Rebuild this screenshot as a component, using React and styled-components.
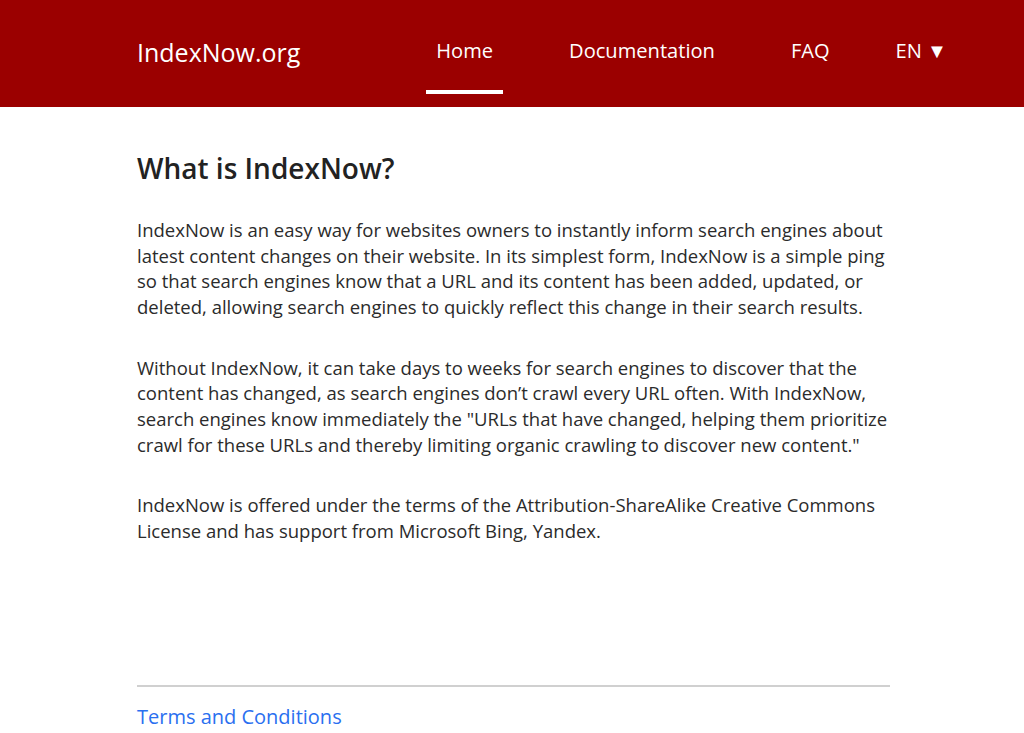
import React from "react";
import styled, { createGlobalStyle } from "styled-components";

const Global = createGlobalStyle`
  html, body { margin: 0; padding: 0; background: #fff; }
  body { font-family: "Open Sans", "Noto Sans", sans-serif; color: #222; }
`;

const Header = styled.header`
  background: #9b0000;
  height: 107px;
`;

const HeaderInner = styled.div`
  width: 750px;
  margin: 0 auto;
  height: 100%;
  display: flex;
  align-items: center;
  justify-content: space-between;
`;

const Brand = styled.a`
  color: #fff;
  font-size: 25px;
  text-decoration: none;
  margin-top: -4px;
`;

const Nav = styled.nav`
  display: flex;
  align-items: stretch;
  height: 100%;
  margin-right: -98px;
`;

const NavItem = styled.a`
  position: relative;
  display: flex;
  align-items: center;
  padding: 0 38px 6px ${(p) => (p.$lang ? "28px" : "38px")};
  color: #fff;
  font-size: 20.1px;
  text-decoration: none;
  ${(p) =>
    p.$active &&
    `&::after {
      content: "";
      position: absolute;
      left: 28px;
      right: 28px;
      bottom: 13px;
      height: 4px;
      background: #fff;
    }`}
`;

const Main = styled.main`
  width: 750px;
  margin: 0 auto;
  padding-top: 42px;
  min-height: 578px;
  box-sizing: border-box;
`;

const Title = styled.h1`
  margin: 0 0 30px;
  font-size: 28px;
  font-weight: 600;
  color: #222;
`;

const Para = styled.p`
  margin: 0 -30px 35px 0;
  font-size: 18.5px;
  line-height: 25.67px;
  color: #2b2b2b;
  white-space: nowrap;
`;

const Footer = styled.footer`
  width: 750px;
  margin: 0 auto;
`;

const Rule = styled.hr`
  margin: 0 -3px 16px 0;
  border: 0;
  border-top: 2px solid #d0d0d0;
`;

const FooterLink = styled.a`
  color: #2a6ff0;
  font-size: 20px;
  text-decoration: none;
`;

export default function App() {
  return (
    <>
      <Global />
      <Header>
        <HeaderInner>
          <Brand href="#">IndexNow.org</Brand>
          <Nav>
            <NavItem href="#" $active>Home</NavItem>
            <NavItem href="#">Documentation</NavItem>
            <NavItem href="#">FAQ</NavItem>
            <NavItem href="#" $lang>EN ▼</NavItem>
          </Nav>
        </HeaderInner>
      </Header>
      <Main>
        <Title>What is IndexNow?</Title>
        <Para>
          IndexNow is an easy way for websites owners to instantly inform search engines about<br />
          latest content changes on their website. In its simplest form, IndexNow is a simple ping<br />
          so that search engines know that a URL and its content has been added, updated, or<br />
          deleted, allowing search engines to quickly reflect this change in their search results.
        </Para>
        <Para>
          Without IndexNow, it can take days to weeks for search engines to discover that the<br />
          content has changed, as search engines don’t crawl every URL often. With IndexNow,<br />
          search engines know immediately the "URLs that have changed, helping them prioritize<br />
          crawl for these URLs and thereby limiting organic crawling to discover new content."
        </Para>
        <Para>
          IndexNow is offered under the terms of the Attribution-ShareAlike Creative Commons<br />
          License and has support from Microsoft Bing, Yandex.
        </Para>
      </Main>
      <Footer>
        <Rule />
        <FooterLink href="#">Terms and Conditions</FooterLink>
      </Footer>
    </>
  );
}
